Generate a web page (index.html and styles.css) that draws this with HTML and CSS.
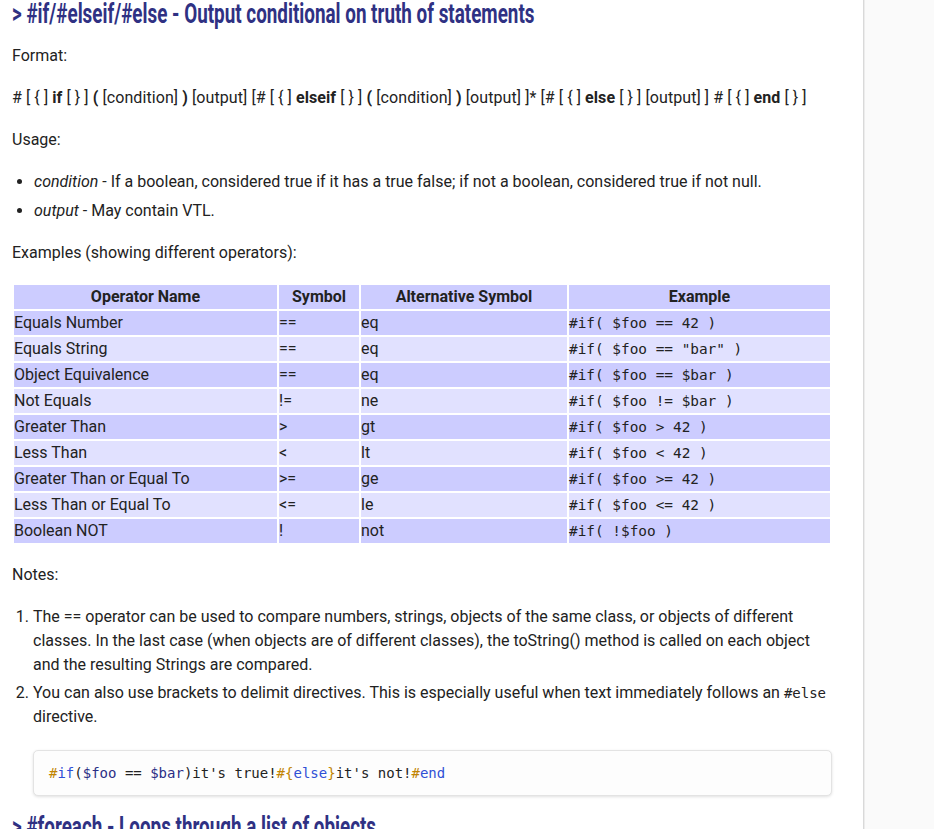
FILE: index.html
```html
<!DOCTYPE html>
<html>
<head>
<meta charset="utf-8">
<link rel="stylesheet" href="styles.css">
</head>
<body>
<div class="layout">
  <main class="content">
    <h2 class="section-title"><span class="title-text">&gt; #if/#elseif/#else - Output conditional on truth of statements</span></h2>
    <p>Format:</p>
    <p class="format"># [ { ] <b>if</b> [ } ] <b>(</b> [condition] <b>)</b> [output] [# [ { ] <b>elseif</b> [ } ] <b>(</b> [condition] <b>)</b> [output] ]* [# [ { ] <b>else</b> [ } ] [output] ] # [ { ] <b>end</b> [ } ]</p>
    <p>Usage:</p>
    <ul class="usage">
      <li><em>condition</em> - If a boolean, considered true if it has a true false; if not a boolean, considered true if not null.</li>
      <li><em>output</em> - May contain VTL.</li>
    </ul>
    <p>Examples (showing different operators):</p>
    <table class="ops">
      <thead>
        <tr><th class="c1">Operator Name</th><th class="c2">Symbol</th><th class="c3">Alternative Symbol</th><th class="c4">Example</th></tr>
      </thead>
      <tbody>
        <tr class="odd"><td>Equals Number</td><td>==</td><td>eq</td><td><code>#if( $foo == 42 )</code></td></tr>
        <tr class="even"><td>Equals String</td><td>==</td><td>eq</td><td><code>#if( $foo == "bar" )</code></td></tr>
        <tr class="odd"><td>Object Equivalence</td><td>==</td><td>eq</td><td><code>#if( $foo == $bar )</code></td></tr>
        <tr class="even"><td>Not Equals</td><td>!=</td><td>ne</td><td><code>#if( $foo != $bar )</code></td></tr>
        <tr class="odd"><td>Greater Than</td><td>&gt;</td><td>gt</td><td><code>#if( $foo &gt; 42 )</code></td></tr>
        <tr class="even"><td>Less Than</td><td>&lt;</td><td>lt</td><td><code>#if( $foo &lt; 42 )</code></td></tr>
        <tr class="odd"><td>Greater Than or Equal To</td><td>&gt;=</td><td>ge</td><td><code>#if( $foo &gt;= 42 )</code></td></tr>
        <tr class="even"><td>Less Than or Equal To</td><td>&lt;=</td><td>le</td><td><code>#if( $foo &lt;= 42 )</code></td></tr>
        <tr class="odd"><td>Boolean NOT</td><td>!</td><td>not</td><td><code>#if( !$foo )</code></td></tr>
      </tbody>
    </table>
    <p>Notes:</p>
    <ol class="notes">
      <li>The == operator can be used to compare numbers, strings, objects of the same class, or objects of different classes. In the last case (when objects are of different classes), the toString() method is called on each object and the resulting Strings are compared.</li>
      <li>You can also use brackets to delimit directives. This is especially useful when text immediately follows an <code>#else</code> directive.
        <pre class="codeblock"><code><span class="hash">#</span><span class="kw">if</span>(<span class="var">$foo</span> == <span class="var">$bar</span>)it's true!<span class="hash">#{</span><span class="kw">else</span><span class="hash">}</span>it's not!<span class="hash">#</span><span class="kw">end</span></code></pre>
      </li>
    </ol>
    <h2 class="section-title"><span class="title-text">&gt; #foreach - Loops through a list of objects</span></h2>
  </main>
  <aside class="sidebar"></aside>
</div>
</body>
</html>
```
FILE: styles.css
```css
html, body {
  margin: 0;
  padding: 0;
  background: #ffffff;
}
body {
  font-family: Roboto, "Noto Sans", sans-serif;
  font-size: 16px;
  line-height: 24px;
  color: #222222;
  overflow: hidden;
  height: 829px;
}
.layout {
  display: flex;
  min-height: 829px;
}
.content {
  flex: none;
  padding: 0 31px 0 12px;
  box-sizing: content-box;
  width: 820px;
}
.sidebar {
  flex: 1;
  background: #fafafa;
  border-left: 1px solid #d9d9d9;
  box-shadow: inset 1px 0 0 #ececec;
}
.section-title {
  font-family: Roboto, "Liberation Sans", sans-serif;
  font-weight: 700;
  font-size: 28px;
  line-height: 28px;
  color: #2f3183;
  margin: 0 0 16px 0;
  white-space: nowrap;
}
.title-text {
  display: inline-block;
  transform: scaleX(0.673);
  transform-origin: 0 50%;
}
p {
  margin: 0 0 18px 0;
}
.format {
  letter-spacing: 0.08px;
}
.usage {
  margin: 0 0 18px 0;
  padding-left: 22px;
}
.usage li {
  margin-bottom: 5px;
}
.usage li:last-child { margin-bottom: 0; }
.ops {
  border-spacing: 2px;
  margin: 0 0 18px 0;
  width: 820px;
  table-layout: fixed;
}
.ops th, .ops td {
  padding: 0;
  height: 24px;
  line-height: 24px;
  text-align: left;
  white-space: nowrap;
}
.ops th {
  background: #ccccff;
  text-align: center;
  font-weight: 700;
}
.ops .c1 { width: 263px; }
.ops .c2 { width: 80px; }
.ops .c3 { width: 206px; }
.ops tr.odd td { background: #ccccff; }
.ops tr.even td { background: #e1e1ff; }
.ops code {
  font-family: "DejaVu Sans Mono", monospace;
  font-size: 14.4px;
  color: #222;
}
.notes {
  margin: 0;
  padding-left: 21px;
}
.notes li {
  margin-bottom: 4px;
}
.notes li code {
  font-family: "DejaVu Sans Mono", monospace;
  font-size: 14px;
}
.codeblock {
  margin: 21px 0 17px 0;
  padding: 11px 15px;
  line-height: 22px;
  background: #fdfdfd;
  border: 1px solid #e3e3e3;
  border-radius: 5px;
  box-shadow: 0 1px 3px rgba(0,0,0,0.12);
}
.codeblock code {
  font-family: "DejaVu Sans Mono", monospace;
  font-size: 14.6px;
  color: #222;
}
.hash { color: #c18401; }
.kw { color: #2f50d6; }
.var { color: #2b2f86; }
```
